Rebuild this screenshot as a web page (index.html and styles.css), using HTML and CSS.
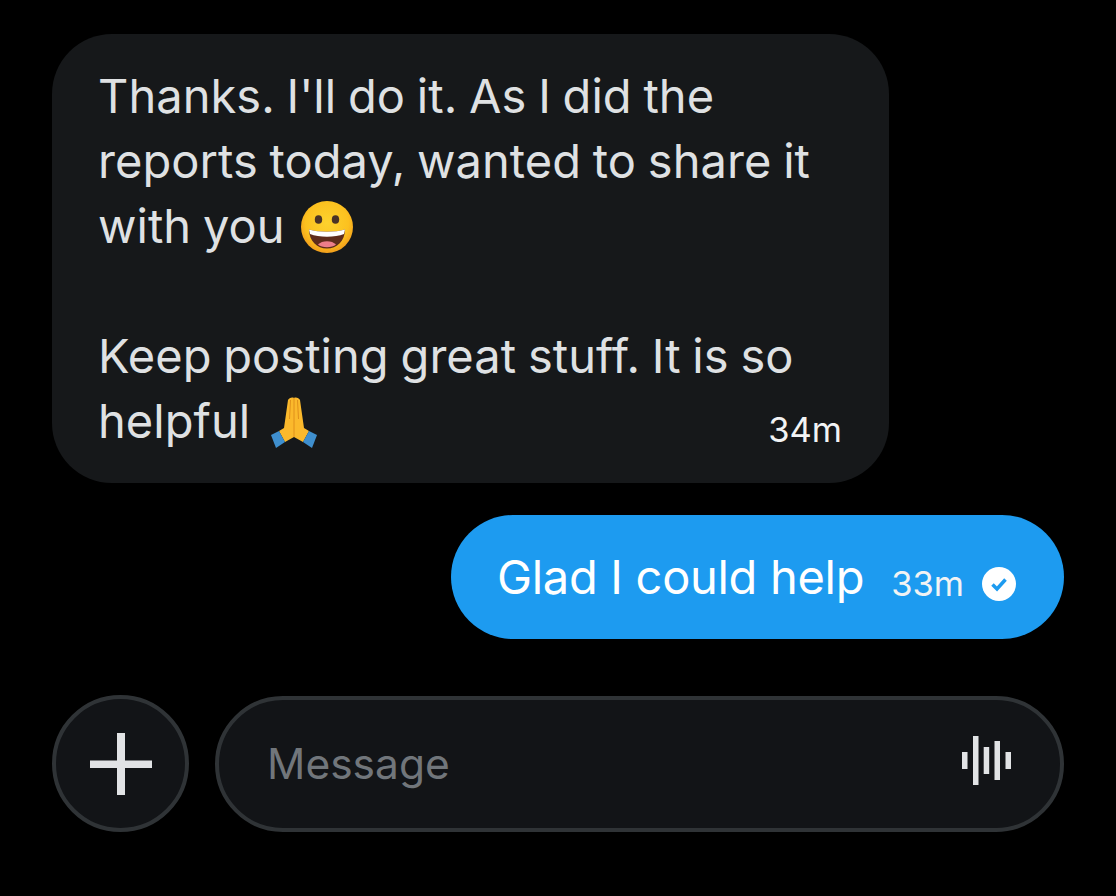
FILE: index.html
```html
<!DOCTYPE html>
<html>
<head>
  <meta charset="utf-8">
  <title>Messages</title>
  <link rel="stylesheet" href="styles.css">
</head>
<body>
  <div class="thread">
    <div class="bubble bubble-in">
      <div class="line">Thanks. I'll do it. As I did the</div>
      <div class="line">reports today, wanted to share it</div>
      <div class="line">with you
        <svg class="emoji emoji-smile" viewBox="0 0 56 56" width="56" height="56">
          <defs>
            <radialGradient id="face" cx="50%" cy="42%" r="55%">
              <stop offset="0%" stop-color="#fdd22e"/>
              <stop offset="75%" stop-color="#fcc11f"/>
              <stop offset="100%" stop-color="#f4a31c"/>
            </radialGradient>
          </defs>
          <circle cx="28" cy="28" r="26" fill="url(#face)"/>
          <ellipse cx="19.500" cy="20.500" rx="3.700" ry="4.300" fill="#4a3326"/>
          <ellipse cx="36.500" cy="20.500" rx="3.700" ry="4.300" fill="#4a3326"/>
          <path d="M10 30.500 C20 33.500 36 33.500 46 30.500 C46 42 38 49.500 28 49.500 C18 49.500 10 42 10 30.500 Z" fill="#5e2c1c"/>
          <path d="M10 30.500 C20 33.500 36 33.500 46 30.500 L45 35 C36 38.500 20 38.500 11 35 Z" fill="#fff"/>
          <path d="M19 45.500 C23 41 33 41 37 45.500 C33 49 23 49 19 45.500 Z" fill="#ed7d8a"/>
        </svg>
      </div>
      <div class="line line-blank"></div>
      <div class="line">Keep posting great stuff. It is so</div>
      <div class="line line-last">
        <span class="line-text">helpful
          <svg class="emoji emoji-hands" viewBox="0 0 56 56" width="56" height="56">
            <path d="M28 42 L19 47 L13 36 L18 33 L22 5 C23 3 26 2 28 3 C30 2 33 3 34 5 L38 33 L43 36 L37 47 Z" fill="#fbb92c"/>
            <path d="M28 3 V42 M24.500 5 L23.500 24 M31.500 5 L32.500 24" fill="none" stroke="#e0901a" stroke-width="1"/>
            <path d="M5 40 L13 36 L19 47 L10 53 Z" fill="#3f8fce"/>
            <path d="M51 40 L43 36 L37 47 L46 53 Z" fill="#3f8fce"/>
          </svg>
        </span>
        <span class="time">34m</span>
      </div>
    </div>

    <div class="bubble bubble-out">
      <span class="out-text">Glad I could help</span>
      <span class="time">33m</span>
      <svg class="check" viewBox="0 0 34 34" width="34" height="34">
        <circle cx="17" cy="17" r="17" fill="#fff"/>
        <path d="M10.500 17.500 L15 22 L23.500 12.500" fill="none" stroke="#1d9bf0" stroke-width="3.500"/>
      </svg>
    </div>
  </div>

  <div class="composer">
    <div class="add-btn">
      <svg viewBox="0 0 62 62" width="62" height="62">
        <path d="M27 0 H35 V27.500 H62 V35 H35 V62 H27 V35 H0 V27.500 H27 Z" fill="#e1e3e5"/>
      </svg>
    </div>
    <div class="input-box">
      <span class="placeholder">Message</span>
      <svg class="voice" viewBox="0 0 50 50" width="50" height="50">
        <rect x="0" y="16" width="5.500" height="17" fill="#e1e3e5"/>
        <rect x="11" y="0" width="5.500" height="49" fill="#e1e3e5"/>
        <rect x="21.700" y="11" width="5.500" height="27" fill="#e1e3e5"/>
        <rect x="32.500" y="5" width="5.500" height="39" fill="#e1e3e5"/>
        <rect x="43.500" y="16" width="5.500" height="17" fill="#e1e3e5"/>
      </svg>
    </div>
  </div>
</body>
</html>
```

FILE: styles.css
```css
html, body {
  margin: 0;
  height: 100%;
  background-color: #000000;
}

body {
  padding: 34px 52px 0 52px;
  box-sizing: border-box;
  font-family: "Inter", "Liberation Sans", sans-serif;
  color: #dfe1e3;
}

.thread {
  display: flex;
  flex-direction: column;
  gap: 32px;
}

.bubble {
  box-sizing: border-box;
}

.bubble-in {
  width: 837px;
  height: 449px;
  padding: 29px 47px 0 46px;
  background-color: #16181a;
  border-radius: 60px;
  font-size: 47px;
  letter-spacing: 0.05px;
  word-spacing: -1.500px;
}

.line {
  height: 65px;
  line-height: 65px;
  white-space: nowrap;
  display: flex;
  align-items: center;
  gap: 14px;
}

.line-last {
  justify-content: space-between;
}

.line-text {
  display: flex;
  align-items: center;
  gap: 16px;
}

.emoji {
  flex: none;
}

.emoji-smile {
  margin-top: 2px;
}

.emoji-hands {
  margin-top: 4px;
}

.time {
  font-size: 34.500px;
  letter-spacing: 0;
  color: #f2f3f4;
  line-height: 40px;
}

.line-last .time {
  margin-top: 18px;
}

.bubble-out {
  align-self: flex-end;
  height: 124px;
  width: 613px;
  padding: 0 46px;
  display: flex;
  align-items: center;
  background-color: #1d9bf0;
  border-radius: 62px;
  color: #ffffff;
}

.out-text {
  font-size: 47px;
  letter-spacing: -0.3px;
  margin-right: 27px;
  margin-bottom: 2px;
}

.bubble-out .time {
  margin-top: 14px;
  margin-right: 18px;
}

.check {
  flex: none;
  margin-top: 14px;
}

.composer {
  display: flex;
  align-items: flex-end;
  gap: 26px;
  margin-top: 56px;
}

.add-btn {
  width: 137px;
  height: 137px;
  box-sizing: border-box;
  flex: none;
  border: 4px solid #2f3336;
  border-radius: 50%;
  background-color: #121417;
  display: flex;
  align-items: center;
  justify-content: center;
}

.input-box {
  flex: 1;
  height: 136px;
  box-sizing: border-box;
  border: 4px solid #2f3336;
  border-radius: 68px;
  background-color: #121417;
  padding: 0 48px;
  display: flex;
  align-items: center;
  justify-content: space-between;
}

.placeholder {
  font-size: 42.500px;
  color: #71767b;
  margin-bottom: 2px;
}

.voice {
  margin-bottom: 6px;
}
```
